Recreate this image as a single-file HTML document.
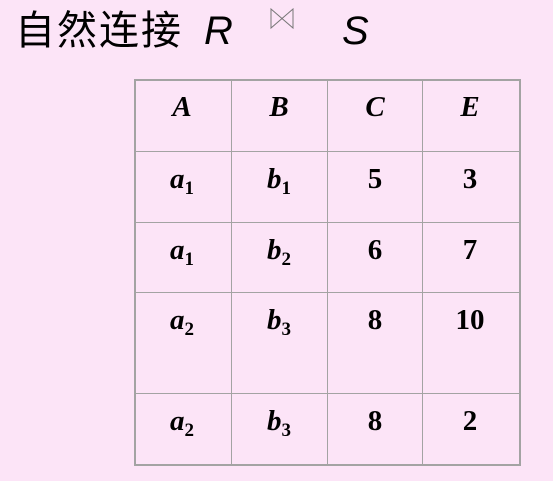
<!DOCTYPE html>
<html><head><meta charset="utf-8"><style>
body{margin:0;width:553px;height:481px;background:#fce4f7;position:relative;overflow:hidden;font-family:"Liberation Serif",serif}
.t{position:absolute;font-weight:bold;font-size:29px;line-height:28px;width:96px;text-align:center;color:#000}
.i{font-style:italic}
sub{font-size:19px;font-style:normal;vertical-align:-6px;line-height:0}
.l{position:absolute;background:#a3a3a3}
</style></head><body>
<div style="position:absolute;left:15px;top:6px;font-family:'Liberation Sans','Noto Sans CJK SC',sans-serif;font-size:40px;line-height:50px;white-space:nowrap;letter-spacing:2px">自然连接</div>
<div style="position:absolute;left:204px;top:6px;font-family:'Liberation Sans',sans-serif;font-style:italic;font-size:40px;line-height:50px">R</div>
<svg style="position:absolute;left:270px;top:8px" width="24" height="22"><path d="M1 1 L23 20 L23 1 L1 20 Z" fill="none" stroke="#777" stroke-width="1"/></svg>
<div style="position:absolute;left:342px;top:6px;font-family:'Liberation Sans',sans-serif;font-style:italic;font-size:40px;line-height:50px">S</div>

<div style="position:absolute;left:134px;top:79px;border:2px solid #a3a3a3;width:383px;height:383px"></div>
<div class="l" style="left:231px;top:80px;width:1px;height:384px"></div>
<div class="l" style="left:327px;top:80px;width:1px;height:384px"></div>
<div class="l" style="left:422px;top:80px;width:1px;height:384px"></div>
<div class="l" style="left:135px;top:151px;width:384px;height:1px"></div>
<div class="l" style="left:135px;top:222px;width:384px;height:1px"></div>
<div class="l" style="left:135px;top:292px;width:384px;height:1px"></div>
<div class="l" style="left:135px;top:393px;width:384px;height:1px"></div>

<div class="t i" style="left:134px;top:93px">A</div>
<div class="t i" style="left:231px;top:93px">B</div>
<div class="t i" style="left:327px;top:93px">C</div>
<div class="t i" style="left:422px;top:93px">E</div>

<div class="t i" style="left:134px;top:165px">a<sub>1</sub></div>
<div class="t i" style="left:231px;top:165px">b<sub>1</sub></div>
<div class="t" style="left:327px;top:165px">5</div>
<div class="t" style="left:422px;top:165px">3</div>

<div class="t i" style="left:134px;top:236px">a<sub>1</sub></div>
<div class="t i" style="left:231px;top:236px">b<sub>2</sub></div>
<div class="t" style="left:327px;top:236px">6</div>
<div class="t" style="left:422px;top:236px">7</div>

<div class="t i" style="left:134px;top:306px">a<sub>2</sub></div>
<div class="t i" style="left:231px;top:306px">b<sub>3</sub></div>
<div class="t" style="left:327px;top:306px">8</div>
<div class="t" style="left:422px;top:306px">10</div>

<div class="t i" style="left:134px;top:407px">a<sub>2</sub></div>
<div class="t i" style="left:231px;top:407px">b<sub>3</sub></div>
<div class="t" style="left:327px;top:407px">8</div>
<div class="t" style="left:422px;top:407px">2</div>
</body></html>
